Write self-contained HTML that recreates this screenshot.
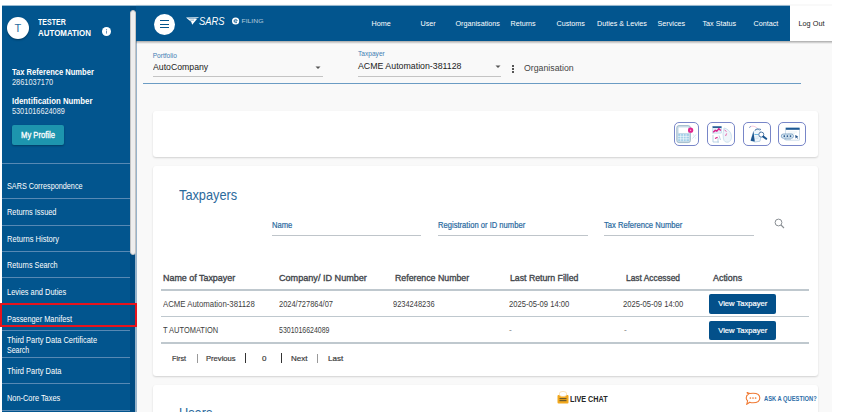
<!DOCTYPE html>
<html><head><meta charset="utf-8">
<style>
*{box-sizing:border-box;margin:0;padding:0}
html,body{width:860px;height:412px;overflow:hidden;background:#fff;font-family:"Liberation Sans",sans-serif}
div,svg{position:absolute}
.t{white-space:nowrap;transform-origin:0 0;line-height:1}
.sep{left:2px;width:128px;height:1px;background:#5789b4}
.mi{left:6.8px;color:#fff;font-size:9px;transform-origin:0 0;white-space:nowrap;line-height:1}
.nav{top:20px;color:#fff;font-size:7.2px;line-height:1;white-space:nowrap}
.card{background:#fff;border-radius:3px;box-shadow:0 1px 2px rgba(0,0,0,.16);overflow:hidden}
.th{color:#43474c;font-weight:400;-webkit-text-stroke:.35px #43474c;font-size:9px;line-height:1;transform-origin:0 0;white-space:nowrap}
.td{color:#3d3d3d;font-size:8.3px;line-height:1;transform-origin:0 0;white-space:nowrap}
.hl{left:161px;width:648px;background:#bfc8ce}
.btn{left:709.3px;width:67px;height:19.6px;-webkit-text-stroke:.2px #fff;background:#03508a;border-radius:2px;color:#fff;font-size:7.6px;line-height:19.6px;text-align:center;white-space:nowrap}
.lbl{-webkit-text-stroke:.2px #2a6aa0;color:#2a6aa0;font-size:8px;line-height:1;white-space:nowrap;transform-origin:0 0}
.ul{height:1px;background:#bfc5ca}
.ic{top:121.8px;height:24px;border:1.3px solid #7886c8;border-radius:5px;background:#fff;overflow:hidden}
.bar{width:1px;height:10px}
</style></head><body>

<!-- page background -->
<div style="left:136px;top:4px;width:696px;height:408px;background:#f9f9f9"></div>

<!-- Sidebar -->
<div style="left:2px;top:5px;width:788px;height:1px;background:rgba(2,85,142,.4)"></div>
<div style="left:2px;top:6px;width:134px;height:406px;background:#02558e"></div>
<div style="left:7px;top:17px;width:22px;height:22px;border-radius:50%;background:#fff;box-shadow:0 1px 2px rgba(0,0,0,.35)"></div>
<div class="t" style="left:14.5px;top:23.3px;color:#2a6aa0;font-size:11px">T</div>
<div class="t" style="left:38px;top:18px;color:#fff;font-weight:700;font-size:8.8px;transform:scaleX(.8)">TESTER</div>
<div class="t" style="left:38px;top:28.8px;color:#fff;font-weight:700;font-size:8.8px;transform:scaleX(.9)">AUTOMATION</div>
<svg style="left:102.3px;top:27.1px" width="9" height="9" viewBox="0 0 9 9"><circle cx="4.5" cy="4.5" r="4.5" fill="#fff"/><circle cx="4.5" cy="2.5" r=".6" fill="#6d93b8"/><rect x="4" y="3.6" width="1" height="3" fill="#6d93b8"/></svg>

<div class="t" style="left:12px;top:67.5px;color:#fff;font-weight:700;font-size:8.8px;transform:scaleX(.86)">Tax Reference Number</div>
<div class="t" style="left:12px;top:78px;color:#e6edf4;font-size:8.8px;transform:scaleX(.84)">2861037170</div>
<div class="t" style="left:12px;top:97.4px;color:#fff;font-weight:700;font-size:8.8px;transform:scaleX(.89)">Identification Number</div>
<div class="t" style="left:12px;top:107.3px;color:#e6edf4;font-size:8.8px;transform:scaleX(.83)">5301016624089</div>

<div style="left:12px;top:125px;width:52px;height:20px;background:#1d95ae;border-radius:2px;box-shadow:0 1px 2px rgba(0,0,0,.3)"></div>
<div class="t" style="left:20.5px;top:130.5px;color:#fff;-webkit-text-stroke:.3px #fff;font-size:8.8px;transform:scaleX(.87)">My Profile</div>

<div class="sep" style="top:163px"></div>
<div class="mi" style="top:182px;transform:scaleX(.808)">SARS Correspondence</div>
<div class="sep" style="top:198px"></div>
<div class="mi" style="top:208px;transform:scaleX(.816)">Returns Issued</div>
<div class="sep" style="top:225px"></div>
<div class="mi" style="top:235px;transform:scaleX(.838)">Returns History</div>
<div class="sep" style="top:251px"></div>
<div class="mi" style="top:261.3px;transform:scaleX(.81)">Returns Search</div>
<div class="sep" style="top:277px"></div>
<div class="mi" style="top:287.5px;transform:scaleX(.827)">Levies and Duties</div>
<div class="mi" style="top:314.5px;transform:scaleX(.817)">Passenger Manifest</div>
<div class="sep" style="top:330px"></div>
<div class="mi" style="top:335.7px;left:7.1px;transform:scaleX(.83)">Third Party Data Certificate</div>
<div class="mi" style="top:346px;left:7.1px;transform:scaleX(.78)">Search</div>
<div class="sep" style="top:357px"></div>
<div class="mi" style="top:367px;left:7.1px;transform:scaleX(.83)">Third Party Data</div>
<div class="sep" style="top:383px"></div>
<div class="mi" style="top:393.8px;left:7.1px;transform:scaleX(.82)">Non-Core Taxes</div>
<div class="sep" style="top:410px"></div>

<!-- scrollbar -->
<div style="left:130px;top:6px;width:6px;height:406px;background:#014c82"></div>
<div style="left:135.2px;top:41px;width:1.6px;height:371px;background:#98b3ca"></div>
<div style="left:130.4px;top:9.8px;width:5.6px;height:245px;border-radius:3px;background:#eeeeee;border:.5px solid #c4c4c4"></div>

<!-- red highlight box -->
<div style="left:0;top:303px;width:137.3px;height:24.3px;border:2.8px solid #e8131c"></div>

<!-- Header -->
<div style="left:136px;top:6px;width:654px;height:35px;background:#02558e"></div>
<div style="left:154px;top:14px;width:21px;height:21px;border-radius:50%;background:#fff"></div>
<div style="left:160.1px;top:20.1px;width:9.3px;height:1.4px;background:#02558e"></div>
<div style="left:160.1px;top:23.5px;width:9.3px;height:1.4px;background:#02558e"></div>
<div style="left:160.1px;top:27px;width:9.3px;height:1.4px;background:#02558e"></div>
<!-- SARS logo -->
<svg style="left:185px;top:16px" width="42" height="11" viewBox="0 0 42 11">
  <path d="M1 1.4 L14.5 1.2 L12 2.2 L8.5 2.6 L12 2.9 L7.2 8.8 L6.2 5.8 L4.2 4.2 Z" fill="#fff"/><path d="M3.5 2.6 H9.5 M5.2 4.2 H9" stroke="#02558e" stroke-width=".45"/>
  <text x="14" y="9" font-family="Liberation Sans" font-style="italic" font-size="10" fill="#fff" textLength="25.5" lengthAdjust="spacingAndGlyphs">SARS</text>
</svg>
<svg style="left:231px;top:15.8px" width="34" height="9" viewBox="0 0 34 9">
  <circle cx="4.6" cy="5" r="3.6" fill="#fff"/>
  <path d="M3.1 5 H6.1 C6.1 3.9 5.5 3.4 4.6 3.4 C3.7 3.4 3.1 4 3.1 5 C3.1 6 3.7 6.6 4.6 6.6 H6" fill="none" stroke="#02558e" stroke-width=".8"/>
  <text x="10.5" y="6.6" font-family="Liberation Sans" font-size="5" fill="#fff" opacity=".68" textLength="22" lengthAdjust="spacingAndGlyphs">FILING</text>
</svg>
<div class="nav" style="left:371.5px">Home</div>
<div class="nav" style="left:420.5px">User</div>
<div class="nav" style="left:455.5px">Organisations</div>
<div class="nav" style="left:510.5px">Returns</div>
<div class="nav" style="left:556.5px">Customs</div>
<div class="nav" style="left:597px">Duties &amp; Levies</div>
<div class="nav" style="left:657.5px">Services</div>
<div class="nav" style="left:702.5px">Tax Status</div>
<div class="nav" style="left:753.5px">Contact</div>
<div style="left:790px;top:6px;width:42px;height:35px;background:#fff"></div>
<div class="t" style="left:798.5px;top:20px;color:#222;font-size:7.3px">Log Out</div>
<div style="left:136px;top:41px;width:696px;height:2.5px;background:linear-gradient(rgba(0,0,0,.32),rgba(0,0,0,0))"></div>

<!-- Portfolio/Taxpayer selectors -->
<div class="t" style="left:152.7px;top:52.7px;color:#3f7db3;font-size:6.6px">Portfolio</div>
<div class="t" style="left:152.7px;top:63.3px;color:#222;font-size:8.8px;transform:scaleX(.99)">AutoCompany</div>
<svg style="left:315px;top:66px" width="6" height="4"><path d="M0.5 0.5 L5.5 0.5 L3 3Z" fill="#555"/></svg>
<div class="ul" style="left:152.5px;top:75.8px;width:170px;background:#c4c4c4"></div>
<div class="t" style="left:358px;top:50.5px;color:#3f7db3;font-size:6.6px">Taxpayer</div>
<div class="t" style="left:358px;top:61.5px;color:#222;font-size:8.8px">ACME Automation-381128</div>
<svg style="left:494.5px;top:65px" width="6" height="4"><path d="M0.5 0.5 L5.5 0.5 L3 3Z" fill="#555"/></svg>
<div class="ul" style="left:358px;top:75.8px;width:143px;background:#c4c4c4"></div>
<div style="left:511.7px;top:64.8px;width:1.9px;height:1.9px;background:#222;border-radius:50%"></div>
<div style="left:511.7px;top:67.9px;width:1.9px;height:1.9px;background:#222;border-radius:50%"></div>
<div style="left:511.7px;top:71px;width:1.9px;height:1.9px;background:#222;border-radius:50%"></div>
<div class="t" style="left:523.6px;top:63.6px;color:#444;font-size:8.5px;transform:scaleX(1.03)">Organisation</div>
<div style="left:143px;top:83px;width:658px;height:1px;background:#6b9cc4"></div>

<!-- Card 1 icons -->
<div class="card" style="left:152.5px;top:110.5px;width:665.4px;height:46.6px"></div>
<div class="ic" style="left:673.7px;width:25.2px"></div>
<div class="ic" style="left:707.4px;width:27.8px"></div>
<div class="ic" style="left:742.8px;width:28px"></div>
<div class="ic" style="left:778.2px;width:27.6px"></div>
<svg style="left:673.7px;top:121.8px" width="26" height="24" viewBox="0 0 26 24">
  <rect x="2.8" y="3.6" width="13.6" height="17" rx="2.2" fill="#cddde8" stroke="#a3bccc" stroke-width="1"/>
  <rect x="4.6" y="5.4" width="9.6" height="5.6" rx=".4" fill="#fff"/>
  <rect x="4.3" y="11.8" width="10.6" height="7.4" fill="#a3cfe8"/>
  <path d="M4 14.4 H15 M4 16.8 H15 M6.7 12 V19.2 M9.4 12 V19.2 M12.1 12 V19.2" stroke="#fff" stroke-width=".6"/>
  <circle cx="16.6" cy="8.2" r="2.6" fill="#e1248e"/>
  <circle cx="16.6" cy="8.2" r=".7" fill="#f7b3d6"/>
  <path d="M18.5 16.5 L22 12.5 M19 13 h.8 M21.3 16 h.8" stroke="#bfe0f0" stroke-width=".8"/>
</svg>
<svg style="left:707.4px;top:121.8px" width="28" height="24" viewBox="0 0 28 24">
  <rect x="5.7" y="4.3" width="8.8" height="6.8" fill="#e3eff8" stroke="#9cc0dc" stroke-width=".4"/>
  <rect x="5.7" y="4.3" width="8.8" height="1.7" fill="#2a5c93"/>
  <path d="M6.2 10.2 L8.2 8.4 L9.8 9.2 L11.8 6.8 L13.8 8.6" fill="none" stroke="#d8208a" stroke-width="1.4"/>
  <path d="M17 6 C20 6.5 23 9 24 12 C25 15 24.5 18.5 21.5 20 C19 20.8 17 19.5 16.5 17 L16 12 Z" fill="#eef5fa" stroke="#c3dbeb" stroke-width=".8"/>
  <path d="M17.5 8 L19.5 9.5 M18.6 14 L19.6 11.5" stroke="#e2559f" stroke-width=".9"/>
  <path d="M8 16.5 L10.6 15.2" stroke="#d8208a" stroke-width="1.1"/>
  <path d="M6 13 V20 H12 M11 16 V20.5 M12 13.5 L13.5 18" fill="none" stroke="#a9c8de" stroke-width=".8"/>
</svg>
<svg style="left:742.8px;top:121.8px" width="28" height="24" viewBox="0 0 28 24">
  <path d="M6.6 5.2 C8.5 3.8 11.5 3.5 14.4 6.4" fill="none" stroke="#f2a3c4" stroke-width=".6"/>
  <path d="M6.2 5.6 L7.8 4.4" stroke="#5f8fbf" stroke-width=".8"/>
  <path d="M14.4 6.4 L10.5 9.5 L8 18.6 L12 20 L17 19.2 L18.8 10.5 Z" fill="#eef5fb" stroke="#7ea8cc" stroke-width=".5"/>
  <path d="M10.5 9.5 L7.6 18.8 L11.8 19.6 Z" fill="#1c5690"/>
  <path d="M12 8.2 C13.5 6.8 16 6.8 18 7.5" fill="none" stroke="#2a5c93" stroke-width=".8"/>
  <path d="M11.5 12.5 H15.5" stroke="#6fb8df" stroke-width="1"/>
  <path d="M12.5 15 H16 M12.5 16.6 H15.5" stroke="#c8dcea" stroke-width=".6"/>
  <circle cx="18.3" cy="12.6" r="2.5" fill="#fff" stroke="#2a5c93" stroke-width=".8"/>
  <path d="M20.3 14.6 L23.2 16.8" stroke="#1c5690" stroke-width="2" stroke-linecap="round"/>
</svg>
<svg style="left:778.2px;top:121.8px" width="28" height="24" viewBox="0 0 28 24">
  <rect x="7.8" y="5.8" width="13.8" height="12.3" fill="#fff" stroke="#9bbad3" stroke-width=".5"/>
  <rect x="7.8" y="5.8" width="13.8" height="2" fill="#1f5a94"/>
  <path d="M9.5 10 H19 M9.5 11.6 H17" stroke="#d9e6ef" stroke-width=".6"/>
  <rect x="3.3" y="12" width="12.2" height="4.2" rx="2" fill="#dbeaf4" stroke="#4f7fae" stroke-width=".6"/>
  <circle cx="6.3" cy="14.1" r=".9" fill="#1f4f86"/><circle cx="9.4" cy="14.1" r=".9" fill="#1f4f86"/><circle cx="12.5" cy="14.1" r=".9" fill="#1f4f86"/>
  <path d="M17.2 13 L17.6 16.5 L18.5 15.5 L19.8 16.8 L20.2 16.3 L19 15 L20.2 14.6 Z" fill="#1f4f86"/>
  <path d="M6 17.5 H13" stroke="#9bbad3" stroke-width=".6"/>
</svg>

<!-- Card 2 taxpayers -->
<div class="card" style="left:152.5px;top:166px;width:665.4px;height:210px"></div>
<div class="t" style="left:179px;top:187.5px;color:#2c6a9c;font-size:14.5px;transform:scaleX(.88)">Taxpayers</div>
<div class="lbl" style="left:272px;top:222.2px;font-size:8.2px;transform:scaleX(.93)">Name</div>
<div class="ul" style="left:272px;top:235px;width:149px"></div>
<div class="lbl" style="left:437.8px;top:222.2px;font-size:8.2px;transform:scaleX(.93)">Registration or ID number</div>
<div class="ul" style="left:437.5px;top:235px;width:150px"></div>
<div class="lbl" style="left:603.6px;top:222.2px;font-size:8.2px;transform:scaleX(.93)">Tax Reference Number</div>
<div class="ul" style="left:603.5px;top:235px;width:150px"></div>
<svg style="left:774px;top:218px" width="11" height="11" viewBox="0 0 11 11"><circle cx="4.5" cy="4.5" r="3.4" fill="none" stroke="#8a8f94" stroke-width="1"/><path d="M7 7 L10 10" stroke="#8a8f94" stroke-width="1.1"/></svg>

<div class="th" style="left:163.4px;top:273.5px;transform:scaleX(.99)">Name of Taxpayer</div>
<div class="th" style="left:279.2px;top:273.5px;transform:scaleX(1.01)">Company/ ID Number</div>
<div class="th" style="left:395.4px;top:273.5px;transform:scaleX(.975)">Reference Number</div>
<div class="th" style="left:510.4px;top:273.5px;transform:scaleX(.97)">Last Return Filled</div>
<div class="th" style="left:626.3px;top:273.5px;transform:scaleX(.93)">Last Accessed</div>
<div class="th" style="left:713px;top:273.5px;transform:scaleX(.99)">Actions</div>
<div class="hl" style="top:289px;height:1.6px"></div>

<div class="td" style="left:163px;top:299.5px;transform:scaleX(.94)">ACME Automation-381128</div>
<div class="td" style="left:278.5px;top:299.5px;transform:scaleX(.9)">2024/727864/07</div>
<div class="td" style="left:393px;top:299.5px;transform:scaleX(.9)">9234248236</div>
<div class="td" style="left:508.5px;top:299.5px;transform:scaleX(.92)">2025-05-09 14:00</div>
<div class="td" style="left:623px;top:299.5px;transform:scaleX(.92)">2025-05-09 14:00</div>
<div class="btn" style="top:294.3px">View Taxpayer</div>
<div class="hl" style="top:315.8px;height:1.3px"></div>

<div class="td" style="left:163px;top:326px;transform:scaleX(.9)">T AUTOMATION</div>
<div class="td" style="left:278.5px;top:326px;transform:scaleX(.84)">5301016624089</div>
<div class="td" style="left:509px;top:326px;color:#888">-</div>
<div class="td" style="left:624px;top:326px;color:#888">-</div>
<div class="btn" style="top:320.8px">View Taxpayer</div>
<div class="hl" style="top:342.3px;height:1.3px"></div>

<div class="td" style="left:172px;top:354.5px;font-size:8px;color:#3a3a3a;-webkit-text-stroke:.2px #3a3a3a;transform:scaleX(.9)">First</div>
<div class="bar" style="left:196.8px;top:353.5px;height:9px;background:#999"></div>
<div class="td" style="left:206px;top:354.5px;font-size:8px;color:#3a3a3a;-webkit-text-stroke:.2px #3a3a3a;transform:scaleX(.95)">Previous</div>
<div class="bar" style="left:245.3px;top:353px;width:1.2px;background:#333"></div>
<div class="td" style="left:262px;top:354.5px;font-size:8px;color:#3a3a3a;-webkit-text-stroke:.2px #3a3a3a">0</div>
<div class="bar" style="left:280.8px;top:353px;width:1.2px;background:#333"></div>
<div class="td" style="left:291px;top:354.5px;font-size:8px;color:#3a3a3a;-webkit-text-stroke:.2px #3a3a3a">Next</div>
<div class="bar" style="left:316.8px;top:353.5px;height:9px;background:#999"></div>
<div class="td" style="left:328px;top:354.5px;font-size:8px;color:#3a3a3a;-webkit-text-stroke:.2px #3a3a3a">Last</div>

<!-- Card 3 -->
<div class="card" style="left:152.5px;top:384.8px;width:665.4px;height:40px">
  <div class="t" style="left:26.5px;top:21.4px;color:#2c6a9c;font-size:14.5px;transform:scaleX(.88)">Users</div>
  <div class="t" style="left:611.8px;top:11.5px;color:#2f6ea8;font-weight:700;font-size:6.3px;transform:scaleX(.915)">ASK A QUESTION?</div>
</div>
<svg style="left:556.5px;top:390px" width="12" height="14" viewBox="0 0 12 14">
  <rect x="0.5" y="5" width="11" height="8.5" rx="1" fill="#f2a81d"/>
  <ellipse cx="6" cy="4" rx="3.8" ry="2.6" fill="#fff" stroke="#f6c97a" stroke-width=".5"/>
  <rect x="2.5" y="8" width="7" height="1.2" fill="#6b5a30"/>
  <rect x="2.5" y="10" width="7" height="1.2" fill="#6b5a30"/>
</svg>
<div class="t" style="left:570.2px;top:395px;color:#262626;font-weight:700;font-size:8.3px;transform:scaleX(.87)">LIVE CHAT</div>
<svg style="left:745px;top:392.3px" width="16" height="13" viewBox="0 0 16 13">
  <path d="M8 1.2 C12.5 1.2 14.8 3.2 14.8 6 C14.8 8.8 12.5 10.8 8 10.8 C6.8 10.8 5.8 10.6 4.8 10.2 L1.8 12.2 L2.6 8.8 C1.5 8 1.2 7 1.2 6 C1.2 4.2 2 2.8 3.6 2 L1.8 0.5 L5 1.5 C5.9 1.3 6.9 1.2 8 1.2Z" fill="#fff" stroke="#f07b35" stroke-width="1.1"/>
  <circle cx="5.4" cy="6" r=".85" fill="#f07b35"/><circle cx="8" cy="6" r=".85" fill="#f07b35"/><circle cx="10.6" cy="6" r=".85" fill="#f07b35"/>
</svg>

</body></html>
